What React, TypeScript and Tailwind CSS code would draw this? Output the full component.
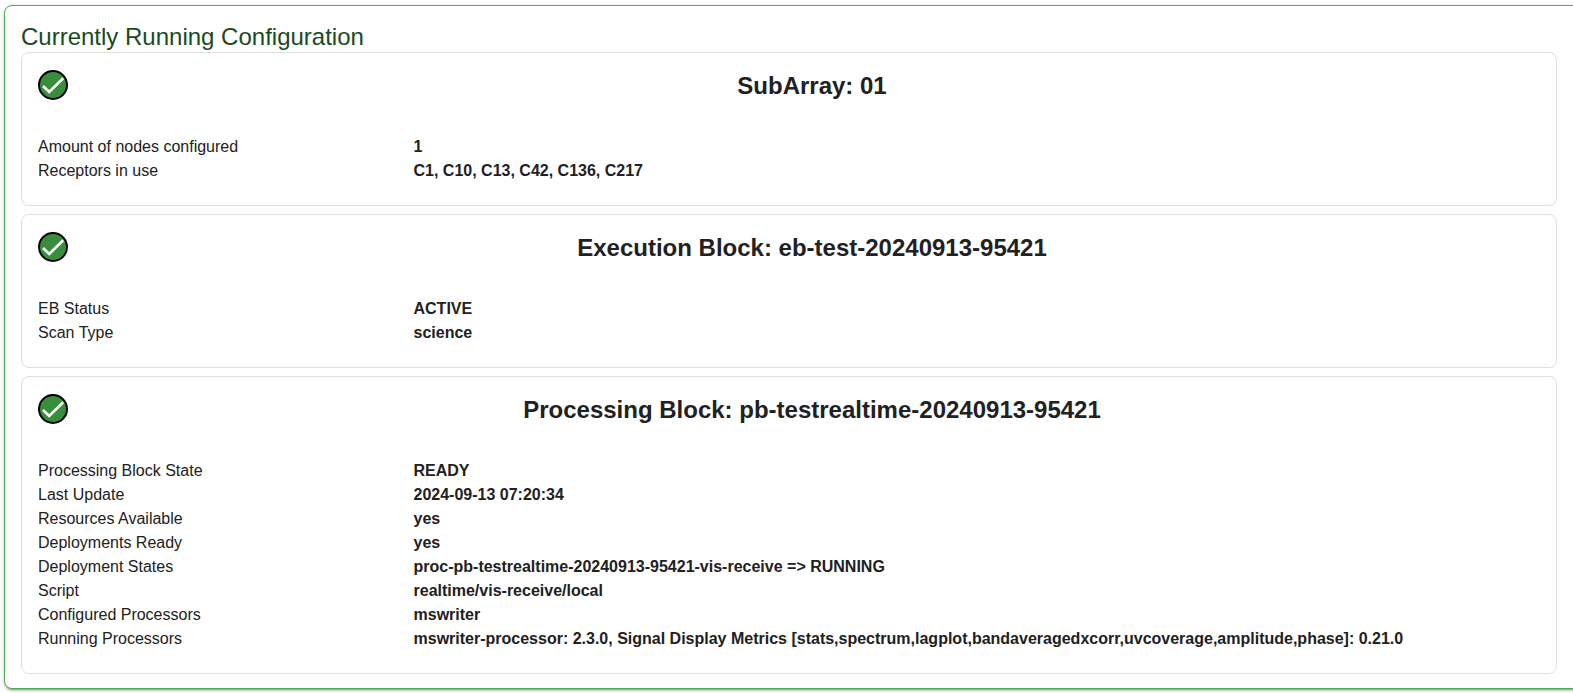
type Row = { label: string; value: string };
type Block = { title: string; rows: Row[] };

const blocks: Block[] = [
  {
    title: "SubArray: 01",
    rows: [
      { label: "Amount of nodes configured", value: "1" },
      { label: "Receptors in use", value: "C1, C10, C13, C42, C136, C217" },
    ],
  },
  {
    title: "Execution Block: eb-test-20240913-95421",
    rows: [
      { label: "EB Status", value: "ACTIVE" },
      { label: "Scan Type", value: "science" },
    ],
  },
  {
    title: "Processing Block: pb-testrealtime-20240913-95421",
    rows: [
      { label: "Processing Block State", value: "READY" },
      { label: "Last Update", value: "2024-09-13 07:20:34" },
      { label: "Resources Available", value: "yes" },
      { label: "Deployments Ready", value: "yes" },
      {
        label: "Deployment States",
        value: "proc-pb-testrealtime-20240913-95421-vis-receive => RUNNING",
      },
      { label: "Script", value: "realtime/vis-receive/local" },
      { label: "Configured Processors", value: "mswriter" },
      {
        label: "Running Processors",
        value:
          "mswriter-processor: 2.3.0, Signal Display Metrics [stats,spectrum,lagplot,bandaveragedxcorr,uvcoverage,amplitude,phase]: 0.21.0",
      },
    ],
  },
];

function StatusOk() {
  return (
    <svg viewBox="0 0 30 30" className="size-[30px] shrink-0" role="img" aria-label="OK">
      <circle cx="15" cy="15" r="14" fill="#388e3c" stroke="#000" strokeWidth="2" />
      <path d="M5 16 L11.2 22 L25.2 8.2" fill="none" stroke="#fff" strokeWidth="2.6" />
    </svg>
  );
}

function StatusCard({ title, rows }: Block) {
  return (
    <section className="rounded-lg border border-[#e0e0e0] bg-white px-4 pt-4 pb-[22px]">
      <header className="mb-8 flex items-start gap-4">
        <div className="pt-px">
          <StatusOk />
        </div>
        <h2 className="flex-1 text-center text-2xl leading-[34px] font-bold">{title}</h2>
      </header>
      <dl>
        {rows.map((row) => (
          <div key={row.label} className="grid grid-cols-4 text-base">
            <dt>{row.label}</dt>
            <dd className="col-span-3 font-bold">{row.value}</dd>
          </div>
        ))}
      </dl>
    </section>
  );
}

export default function App() {
  return (
    <div className="overflow-hidden bg-white pt-[5px] pb-1 pl-1 font-['Liberation_Sans',Arial,sans-serif] text-[#212121]">
      <main className="-mr-4 rounded-lg border border-[#4caf50] bg-white pt-4 pr-[31px] pb-[14px] pl-4 shadow-[0_3px_1px_-2px_rgba(0,0,0,0.2),0_2px_2px_0_rgba(0,0,0,0.14),0_1px_5px_0_rgba(0,0,0,0.12)]">
        <h1 className="text-2xl leading-[30px] text-[#1b4a1f]">Currently Running Configuration</h1>
        <div className="flex flex-col gap-2">
          {blocks.map((block) => (
            <StatusCard key={block.title} {...block} />
          ))}
        </div>
      </main>
    </div>
  );
}
